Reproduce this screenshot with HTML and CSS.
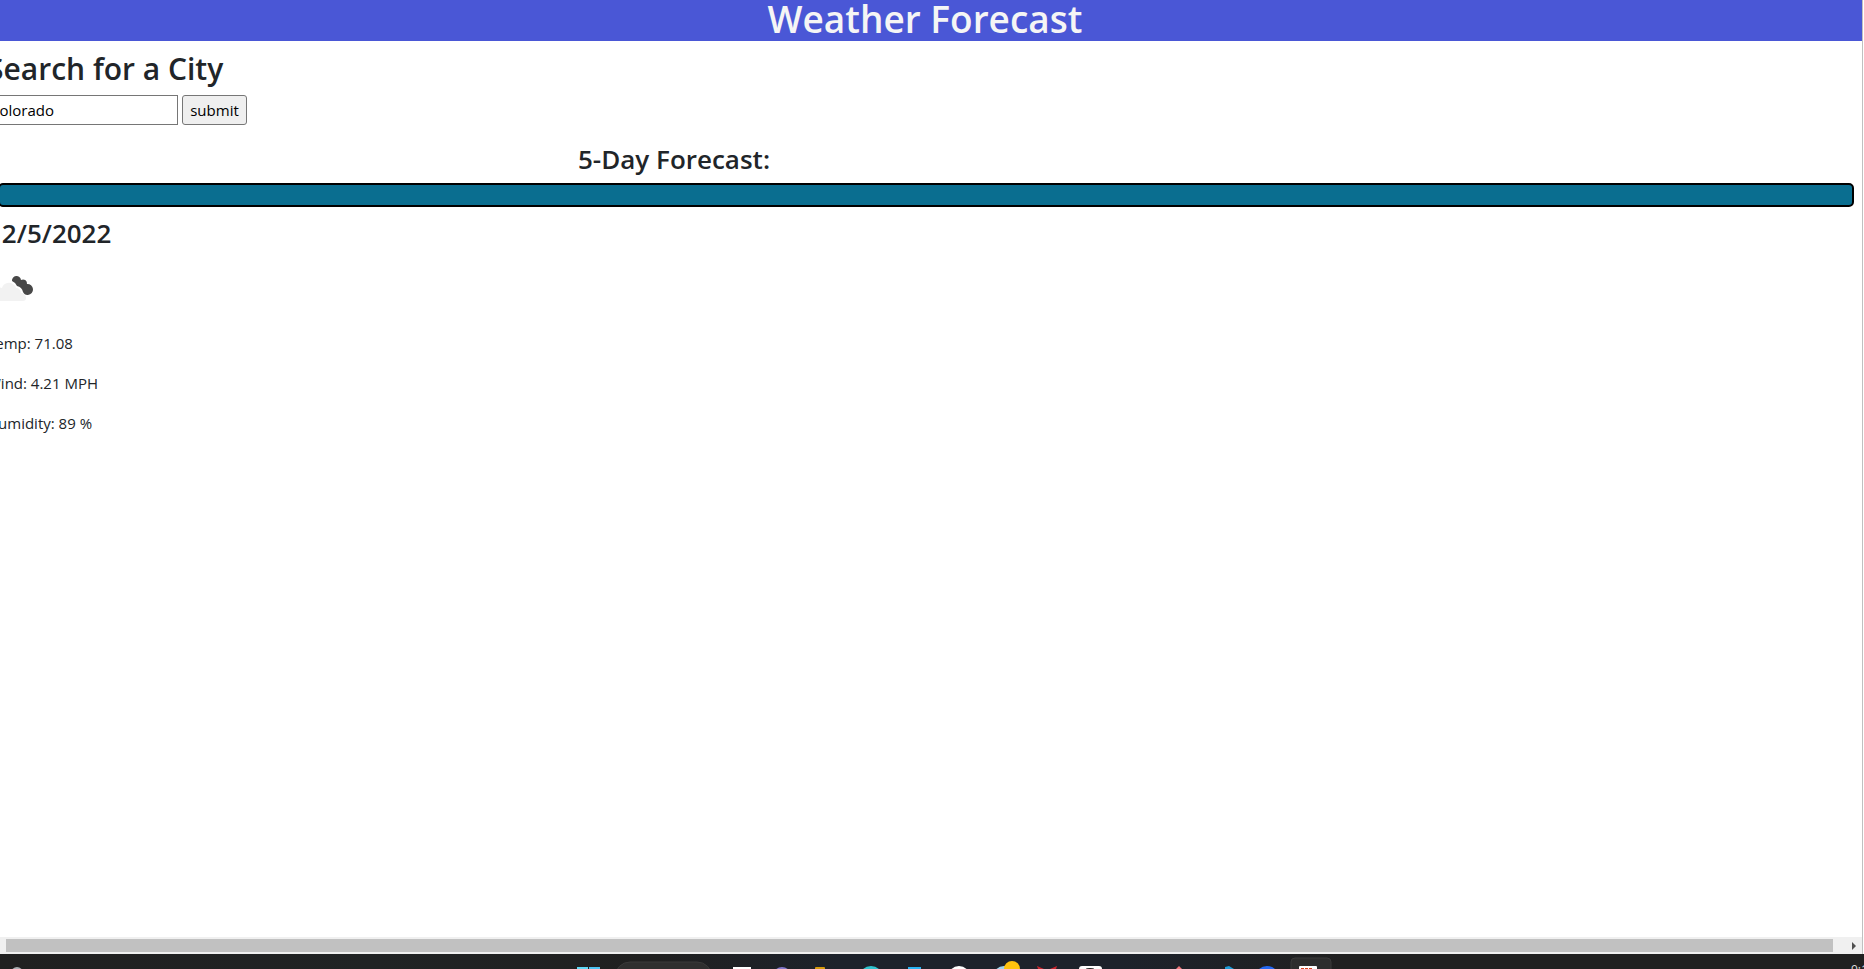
FILE: index.html
```html
<!DOCTYPE html>
<html lang="en">
<head>
<meta charset="utf-8">
<title>Weather Forecast</title>
<link rel="stylesheet" href="styles.css">
</head>
<body>
<div class="window">
  <div class="page">
    <header class="banner"><h1>Weather Forecast</h1></header>
    <main class="content">
      <form class="search">
        <h2><label for="city">Search for a City</label></h2>
        <div class="search-row">
          <input id="city" class="city" type="text" value="Colorado">
          <button class="submit" type="button">submit</button>
        </div>
      </form>
      <h3 class="forecast-title">5-Day Forecast:</h3>
      <div class="panel"></div>
      <section class="day">
        <h3>12/5/2022</h3>
        <svg class="weather" viewBox="0 0 50 50" role="img" aria-label="Broken clouds">
          <path fill="#484848" d="M25 19a4 4 0 0 1 9-1a4 4 0 0 1 6 4a4 4 0 1 1 1 11a5 5 0 0 1-5-3a8 8 0 0 0-6-6a9 9 0 0 0-5-5z"/>
          <path fill="#f2f2f2" d="M8 39a6 6 0 0 1 0-11a6 6 0 0 1 7-2a7 7 0 0 1 12-3q2 1 2 3a5 5 0 0 1 5 5a5 5 0 0 1 5 5a3 3 0 0 1-3 3z"/>
        </svg>
        <p>Temp: 71.08</p>
        <p>Wind: 4.21 MPH</p>
        <p>Humidity: 89 %</p>
      </section>
    </main>
  </div>
  <div class="scrollbar">
    <div class="thumb"></div>
    <svg class="arrow" viewBox="0 0 4 8"><path fill="#505050" d="M0 0l4 4-4 4z"/></svg>
  </div>
</div>
<footer class="taskbar">
  <svg class="tray" viewBox="0 0 1864 15" preserveAspectRatio="none" aria-hidden="true">
    <circle cx="17" cy="19" r="6" fill="#a9adb2"/>
    <path fill="#5fd8f5" d="M577 13h11v2h-11z"/><path fill="#4cc2f1" d="M589 13h11v2h-11z"/>
    <rect x="615" y="8" width="97" height="30" rx="15" fill="#2f2f2f" stroke="#3a3a3a"/>
    <path fill="#fff" d="M733 13h18v2h-18z"/>
    <circle cx="782" cy="22" r="9" fill="#8378cb"/>
    <rect x="815" y="13" width="10" height="5" rx="1" fill="#d69a0c"/>
    <circle cx="871" cy="24" r="12" fill="#2fc4cf"/>
    <path fill="#28b4f5" d="M908 13h13v2h-13z"/>
    <circle cx="959" cy="23" r="11" fill="#fff"/>
    <circle cx="1004" cy="23" r="11" fill="#9fd4ef"/>
    <circle cx="1012" cy="15" r="8" fill="#ffc20e"/>
    <path fill="#c9252d" d="M1037 12l7 3h-6zM1057 12l-7 3h6z"/>
    <rect x="1079" y="12" width="23" height="12" rx="3" fill="#fff"/><ellipse cx="1090" cy="15" rx="4" ry="1" fill="#222"/>
    <path fill="#f2777a" d="M1179 12l3 3h-6z"/>
    <path fill="#1e9bd7" d="M1229 12l5 3h-9v-2z"/>
    <circle cx="1267" cy="24" r="12" fill="#2468f2"/>
    <rect x="1291" y="4" width="40" height="30" rx="4" fill="#2d2d2d" stroke="#3a3a3a"/>
    <rect x="1299" y="12" width="18" height="6" rx="1" fill="#fff"/>
    <path stroke="#d8431f" d="M1301 14.500h12" stroke-dasharray="3 1"/>
  </svg>
  <span class="clock">9:17</span>
</footer>
</body>
</html>
```
FILE: styles.css
```css
* { box-sizing: border-box; }
body {
  margin: 0;
  height: 100vh;
  display: flex;
  flex-direction: column;
  overflow: hidden;
  background: #fff;
  color: #212529;
  font: 400 15px/24px "Open Sans", "Noto Sans", sans-serif;
}
h1, h2, h3, p { margin: 0; font-weight: 600; }
.window {
  flex: 1;
  min-height: 0;
  display: flex;
  flex-direction: column;
  overflow: hidden;
  border-right: 1px solid #c0c0c0;
  margin-right: 1px;
}
.page { flex: 1; min-height: 0; }
.banner {
  height: 41px;
  padding-right: 12px;
  background: #4a57d6;
  color: #f5f5f5;
  text-align: center;
}
.banner h1 { font-size: 37px; line-height: 38px; }
.content { margin-left: -13px; padding-right: 8px; }
.search { padding-top: 9px; }
.search h2 { font-size: 30px; line-height: 38px; }
.search-row { display: flex; gap: 4px; margin-top: 7px; }
.city, .submit {
  height: 30px;
  border: 1px solid #767676;
  font: inherit;
  color: #000;
}
.city { width: 191px; padding: 0 2px; background: #fff; }
.submit { width: 65px; padding: 0; border-radius: 3px; background: #efefef; }
.forecast-title {
  margin-top: 17px;
  padding-left: 591px;
  font-size: 26px;
  line-height: 34px;
}
.panel {
  height: 24px;
  margin-top: 7px;
  margin-left: 11px;
  border: 2px solid #000;
  border-radius: 5px;
  background: #0a6e90;
}
.day h3 { margin-top: 9px; font-size: 26px; line-height: 34px; }
.weather { display: block; width: 50px; height: 50px; margin: 12px 0 19px; }
.day p { font-weight: 400; margin-bottom: 16px; }
.scrollbar {
  display: flex;
  align-items: center;
  height: 17px;
  padding-left: 6px;
  padding-right: 6px;
  background: #f0f0f0;
}
.thumb { flex: 1; height: 13px; background: #c1c1c1; }
.arrow { width: 4px; height: 8px; margin-left: 19px; }
.taskbar {
  position: relative;
  height: 15px;
  overflow: hidden;
  background: linear-gradient(90deg, #202020, #202324 20%, #202020 35%, #1d222b 45%, #1d222b 60%, #202020 72%, #202020);
}
.tray { display: block; width: 100%; height: 15px; }
.clock {
  position: absolute;
  top: 8px;
  left: calc(100% - 13px);
  color: #ddd;
  font-size: 12px;
  line-height: 16px;
}
```
